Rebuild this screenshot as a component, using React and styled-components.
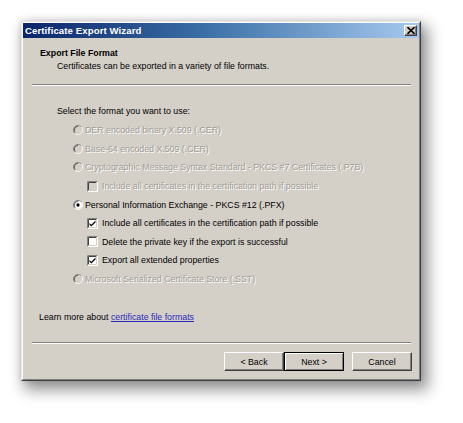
import React from "react";
import styled, { createGlobalStyle } from "styled-components";

const GlobalStyle = createGlobalStyle`
  html, body { margin: 0; padding: 0; background: #ffffff; }
  body {
    font-family: "Liberation Sans", Arial, sans-serif;
    font-size: 8.8px;
    color: #000;
  }
`;

const Page = styled.div`
  width: 463px;
  height: 423px;
  padding: 21px 0 0 21px;
  box-sizing: border-box;
  overflow: hidden;
`;

const Window = styled.div`
  width: 400px;
  height: 360px;
  box-sizing: border-box;
  background: #d4d0c8;
  border-top: 1px solid #e8e6e0;
  border-left: 1px solid #e8e6e0;
  border-right: 1px solid #404040;
  border-bottom: 1px solid #404040;
  box-shadow: 5px 7px 14px 2px rgba(0, 0, 0, 0.42), 0 0 6px rgba(0, 0, 0, 0.12);
  display: flex;
  flex-direction: column;
`;

const Frame = styled.div`
  flex: 1;
  border-top: 1px solid #ffffff;
  border-left: 1px solid #ffffff;
  border-right: 1px solid #808080;
  border-bottom: 1px solid #808080;
  display: flex;
  flex-direction: column;
`;

const TitleBar = styled.div`
  height: 15px;
  display: flex;
  align-items: center;
  justify-content: space-between;
  padding: 0 2px 0 2px;
  background: linear-gradient(to right, #0a246a 0%, #3a6ea5 45%, #a6caf0 100%);
`;

const TitleText = styled.span`
  color: #ffffff;
  font-weight: bold;
  font-size: 9.6px;
  letter-spacing: 0.1px;
`;

const CloseButton = styled.div`
  width: 13px;
  height: 11px;
  box-sizing: border-box;
  background: #d4d0c8;
  border-top: 1px solid #ffffff;
  border-left: 1px solid #ffffff;
  border-right: 1px solid #404040;
  border-bottom: 1px solid #404040;
  box-shadow: inset -1px -1px 0 #808080;
  display: flex;
  align-items: center;
  justify-content: center;
`;

const Body = styled.div`
  flex: 1;
  display: flex;
  flex-direction: column;
`;

const Heading = styled.div`
  font-weight: bold;
  line-height: 13px;
  margin: 9px 0 0 17px;
`;

const Subheading = styled.div`
  line-height: 13px;
  margin-left: 34px;
`;

const Separator = styled.div`
  height: 0;
  border-top: 1px solid #808080;
  border-bottom: 1px solid #ffffff;
  margin: ${(p) => p.$top}px 8px 0 9px;
`;

const Prompt = styled.div`
  line-height: 13px;
  margin: 19px 0 3px 34px;
`;

const OptionList = styled.div`
  display: flex;
  flex-direction: column;
`;

const Row = styled.div`
  height: 18.6px;
  display: flex;
  align-items: center;
  gap: ${(p) => (p.$sub ? 4 : 2)}px;
  padding-left: ${(p) => (p.$sub ? 64 : 50)}px;
  color: ${(p) => (p.$disabled ? "#a09d96" : "#000")};
  text-shadow: ${(p) => (p.$disabled ? "1px 1px 0 #ffffff" : "none")};
`;

const LearnMore = styled.div`
  line-height: 13px;
  margin: 23px 0 0 16px;
`;

const Link = styled.a`
  color: #2a2ab8;
  text-decoration: underline;
  cursor: pointer;
`;

const ButtonBar = styled.div`
  display: flex;
  justify-content: flex-end;
  margin: 8px 7px 0 0;
`;

const Button = styled.div`
  width: 60px;
  height: 19px;
  box-sizing: border-box;
  display: flex;
  align-items: center;
  justify-content: center;
  background: #d4d0c8;
  margin-left: ${(p) => p.$gap || 0}px;
  border-top: 1px solid ${(p) => (p.$default ? "#000" : "#ffffff")};
  border-left: 1px solid ${(p) => (p.$default ? "#000" : "#ffffff")};
  border-right: 1px solid #404040;
  border-bottom: 1px solid #404040;
  box-shadow: ${(p) =>
    p.$default
      ? "inset 1px 1px 0 #ffffff, inset -1px -1px 0 #808080"
      : "inset -1px -1px 0 #808080"};
  ${(p) => p.$default && "outline: 1px solid #000; outline-offset: -1px;"}
`;

const Radio = ({ checked, disabled }) => (
  <svg width="10" height="10" viewBox="0 0 12 12" style={{ flexShrink: 0 }}>
    <path d="M6 0.5 A5.5 5.5 0 0 0 0.5 6 A5.5 5.5 0 0 0 2.1 9.9" fill="none" stroke="#808080" strokeWidth="1" />
    <path d="M2.1 9.9 A5.5 5.5 0 0 0 11.5 6 A5.5 5.5 0 0 0 9.9 2.1" fill="none" stroke="#ffffff" strokeWidth="1" />
    <path d="M9.9 2.1 A5.5 5.5 0 0 0 6 0.5" fill="none" stroke="#808080" strokeWidth="1" />
    <circle cx="6" cy="6" r="4.5" fill={disabled ? "#d4d0c8" : "#ffffff"} />
    <path d="M6 1.5 A4.5 4.5 0 0 0 1.5 6 A4.5 4.5 0 0 0 2.8 9.2" fill="none" stroke="#404040" strokeWidth="1" />
    {checked && <circle cx="6" cy="6" r="2" fill="#000" />}
  </svg>
);

const Check = ({ checked, disabled }) => (
  <svg width="11" height="11" viewBox="0 0 11 11" style={{ flexShrink: 0 }}>
    <rect x="0" y="0" width="11" height="11" fill="#ffffff" />
    <path d="M0.5 10.5 V0.5 H10.5" fill="none" stroke="#808080" />
    <path d="M1.5 9.5 V1.5 H9.5" fill="none" stroke="#404040" />
    <path d="M1.5 9.5 H9.5 V1.5" fill="none" stroke="#d4d0c8" />
    <rect x="2" y="2" width="7" height="7" fill={disabled ? "#d4d0c8" : "#ffffff"} />
    {checked && (
      <path d="M2.5 5 L4.3 6.8 L8.5 2.6 L8.5 4.4 L4.3 8.6 L2.5 6.8 Z" fill="#000" />
    )}
  </svg>
);

const CloseX = () => (
  <svg width="8" height="7" viewBox="0 0 8 7">
    <path d="M0.5 0 L4 3.5 L7.5 0 M0.5 7 L4 3.5 L7.5 7" stroke="#000" strokeWidth="1.6" fill="none" />
  </svg>
);

const options = [
  { kind: "radio", label: "DER encoded binary X.509 (.CER)", disabled: true },
  { kind: "radio", label: "Base-64 encoded X.509 (.CER)", disabled: true },
  { kind: "radio", label: "Cryptographic Message Syntax Standard - PKCS #7 Certificates (.P7B)", disabled: true },
  { kind: "check", label: "Include all certificates in the certification path if possible", disabled: true },
  { kind: "radio", label: "Personal Information Exchange - PKCS #12 (.PFX)", checked: true },
  { kind: "check", label: "Include all certificates in the certification path if possible", checked: true },
  { kind: "check", label: "Delete the private key if the export is successful" },
  { kind: "check", label: "Export all extended properties", checked: true },
  { kind: "radio", label: "Microsoft Serialized Certificate Store (.SST)", disabled: true },
];

export default function App() {
  return (
    <>
      <GlobalStyle />
      <Page>
        <Window>
          <Frame>
            <TitleBar>
              <TitleText>Certificate Export Wizard</TitleText>
              <CloseButton>
                <CloseX />
              </CloseButton>
            </TitleBar>
            <Body>
              <Heading>Export File Format</Heading>
              <Subheading>Certificates can be exported in a variety of file formats.</Subheading>
              <Separator $top={11} />
              <Prompt>Select the format you want to use:</Prompt>
              <OptionList>
                {options.map((o, i) => (
                  <Row key={i} $sub={o.kind === "check"} $disabled={o.disabled}>
                    {o.kind === "radio" ? (
                      <Radio checked={o.checked} disabled={o.disabled} />
                    ) : (
                      <Check checked={o.checked} disabled={o.disabled} />
                    )}
                    <span>{o.label}</span>
                  </Row>
                ))}
              </OptionList>
              <LearnMore>
                Learn more about <Link>certificate file formats</Link>
              </LearnMore>
              <Separator $top={18} />
              <ButtonBar>
                <Button>&lt; Back</Button>
                <Button $default>Next &gt;</Button>
                <Button $gap={8}>Cancel</Button>
              </ButtonBar>
            </Body>
          </Frame>
        </Window>
      </Page>
    </>
  );
}
